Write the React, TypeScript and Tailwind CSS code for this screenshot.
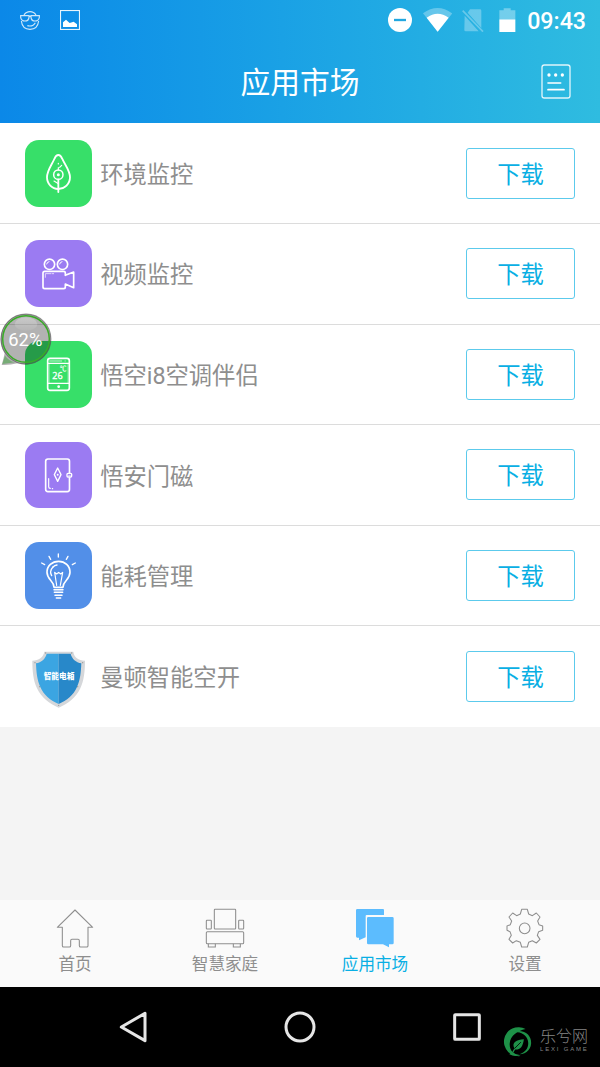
import { ReactNode } from "react";

type AppItem = {
  name: string;
  icon: ReactNode;
  tile: string;
};

type TabItem = {
  label: string;
  icon: ReactNode;
  active?: boolean;
};

function LeafIcon() {
  return (
    <svg viewBox="0 0 200 200" className="h-full w-full" fill="none" stroke="#fff" strokeWidth="5.5" strokeLinecap="round">
      <path d="M100 45C93 45 91 50 88 57C80 75 66 92 66 112C66 132 81 147 100 147C119 147 135 132 135 112C135 92 120 75 112 57C109 50 107 45 100 45Z" />
      <circle cx="100" cy="104" r="14" strokeWidth="4.5" />
      <circle cx="100" cy="104" r="4.5" fill="#fff" stroke="none" />
      <path d="M100 119V156" />
      <path d="M100 90V83M104 82L110 76M87 123L98 130M100 70V72" strokeWidth="3.5" />
    </svg>
  );
}

function CameraIcon() {
  return (
    <svg viewBox="0 0 200 200" className="h-full w-full" fill="none" stroke="#fff" strokeWidth="5" strokeLinecap="round" strokeLinejoin="round">
      <circle cx="73.5" cy="73" r="15.5" />
      <circle cx="112.5" cy="73" r="15.5" />
      <path d="M65 72Q66 66 72 65M104 72Q105 66 111 65" strokeWidth="3" />
      <path d="M59 94H116Q121 94 121 99V106L146 96V143L121 132V141Q121 146 116 146H59Q54 146 54 141V99Q54 94 59 94Z" />
      <path d="M61 112V101H77M81 101H86" strokeWidth="3" opacity="0.7" />
    </svg>
  );
}

function AirConditionerIcon() {
  return (
    <svg viewBox="0 0 200 200" className="h-full w-full" fill="none" stroke="#fff" strokeWidth="5" strokeLinecap="round">
      <rect x="68" y="52" width="65" height="96" rx="7" />
      <path d="M69 67H132M69 127H132" strokeWidth="3.5" />
      <path d="M74 60H110M120 60H121" strokeWidth="2" />
      <path d="M73 67V127M128.5 67V127" strokeWidth="1.5" opacity="0.6" />
      <circle cx="101" cy="137" r="4" fill="#fff" stroke="none" />
      <text x="82" y="115" fontSize="27" fill="#fff" stroke="#fff" strokeWidth="1" className="font-['Open_Sans',sans-serif]">
        26
      </text>
      <text x="105" y="91" fontSize="19" fill="#fff" stroke="#fff" strokeWidth="0.5" className="font-['Noto_Sans_CJK_SC',sans-serif]">
        ℃
      </text>
    </svg>
  );
}

function DoorIcon() {
  return (
    <svg viewBox="0 0 200 200" className="h-full w-full" fill="none" stroke="#fff" strokeWidth="5" strokeLinecap="round" strokeLinejoin="round">
      <path d="M133.5 92V58Q133.5 51 127 51H69Q62 51 62 58V142Q62 149 69 149H127Q133.5 149 133.5 142V108" />
      <path d="M98 78L108 98L98 118L88 98Z" strokeWidth="4" />
      <circle cx="98" cy="98" r="3" fill="#fff" stroke="none" />
      <rect x="126" y="94" width="14" height="11" rx="3" strokeWidth="4" />
      <path d="M131 100H136" strokeWidth="2" />
      <path d="M71 110V134Q71 139 76 139M82 140H83" strokeWidth="3.5" />
    </svg>
  );
}

function BulbIcon() {
  return (
    <svg viewBox="0 0 200 200" className="h-full w-full" fill="none" stroke="#fff" strokeWidth="5" strokeLinecap="round" strokeLinejoin="round">
      <path d="M87 136C87 115 66 114 66 91C66 72 81 58 101 58C120 58 135 72 135 91C135 114 114 115 114 136Z" />
      <path d="M87 143H114M88 151H113M90 160H111M94 168H107" strokeWidth="4.5" />
      <path d="M84 75Q89 70 96 69M77 91V93Q79 99 80 101" strokeWidth="4" />
      <path d="M77 89Q78 81 84 75" strokeWidth="4" />
      <path d="M95 130L89 91L95 96L101 91L107 96L113 91L106 130" strokeWidth="3.5" />
      <path d="M100 36V45M72 43L77 52M129 43L124 52M50 63L59 68M151 63L142 68" strokeWidth="4" />
    </svg>
  );
}

function ShieldIcon() {
  return (
    <svg viewBox="0 0 200 200" className="h-full w-full">
      <path
        d="M58 26H145C147 42 160 53 180 53C180 85 177 112 166 136C152 165 130 182 101 194C73 182 50 165 36 136C25 112 22 85 22 53C42 53 55 42 58 26Z"
        fill="#d5d7da"
      />
      <path d="M101 32H65C61 48 49 58 33 61C34 88 36 110 46 132C57 157 76 172 101 183Z" fill="#3ba5e2" />
      <path d="M101 32H137C141 48 153 58 169 61C168 88 166 110 156 132C145 157 126 172 101 183Z" fill="#2888c9" />
      <g fill="#999">
        <circle cx="62" cy="30" r="2" />
        <circle cx="140" cy="30" r="2" />
        <circle cx="30" cy="59" r="2" />
        <circle cx="173" cy="59" r="2" />
        <circle cx="44" cy="131" r="2" />
        <circle cx="158" cy="131" r="2" />
        <circle cx="101" cy="187" r="2" />
      </g>
      <text x="56" y="109" fontSize="23" fontWeight="900" fill="#fff" className="font-['Noto_Sans_CJK_SC',sans-serif]">
        智能电箱
      </text>
    </svg>
  );
}

function HomeIcon() {
  return (
    <svg viewBox="0 0 120 120" className="h-10 w-10" fill="none" stroke="currentColor" strokeWidth="3.2" strokeLinejoin="round">
      <path d="M60 6L7 58H22V113Q22 117 26 117H43Q47 117 47 113V98Q47 94 51 94H69Q73 94 73 98V113Q73 117 77 117H95Q99 117 99 113V58H113Z" />
    </svg>
  );
}

function SofaIcon() {
  return (
    <svg viewBox="0 0 120 120" className="h-10 w-10" fill="none" stroke="currentColor" strokeWidth="3.2">
      <rect x="28" y="4" width="64" height="59" rx="2" />
      <rect x="4" y="37" width="15" height="26" rx="2" />
      <rect x="101" y="37" width="15" height="26" rx="2" />
      <rect x="4" y="71" width="112" height="36" rx="3" />
      <path d="M10 107V117H31V107M85 107V117H106V107" />
    </svg>
  );
}

function MarketIcon() {
  return (
    <svg viewBox="0 0 120 120" className="h-10 w-10" fill="#5cbcfe">
      <path d="M7 3H84Q87 3 87 6V21H35Q32 21 32 24V88L12 97V89H7Q3 89 3 85V7Q3 3 7 3Z" />
      <path d="M40 27H112Q116 27 116 31V105Q116 109 112 109H102V118L84 109H40Q36 109 36 105V31Q36 27 40 27Z" />
    </svg>
  );
}

function GearIcon() {
  return (
    <svg viewBox="0 0 120 120" className="h-10 w-10" fill="none" stroke="currentColor" strokeWidth="3.2" strokeLinejoin="round">
      <path d="M50 4H67L71 18L82 23L94 15L105 27L98 39L102 50L113 54V67L101 71L97 82L105 94L94 105L82 98L71 103L67 117H50L46 103L34 98L23 105L12 94L19 82L15 71L6 67V54L16 50L20 39L12 27L23 15L35 23L46 18Z" />
      <circle cx="59" cy="61" r="16" />
    </svg>
  );
}

const apps: AppItem[] = [
  { name: "环境监控", icon: <LeafIcon />, tile: "bg-[#37df69]" },
  { name: "视频监控", icon: <CameraIcon />, tile: "bg-[#9b7bf2]" },
  { name: "悟空i8空调伴侣", icon: <AirConditionerIcon />, tile: "bg-[#37df69]" },
  { name: "悟安门磁", icon: <DoorIcon />, tile: "bg-[#9b7bf2]" },
  { name: "能耗管理", icon: <BulbIcon />, tile: "bg-[#528fe8]" },
  { name: "曼顿智能空开", icon: <ShieldIcon />, tile: "" },
];

const tabs: TabItem[] = [
  { label: "首页", icon: <HomeIcon /> },
  { label: "智慧家庭", icon: <SofaIcon /> },
  { label: "应用市场", icon: <MarketIcon />, active: true },
  { label: "设置", icon: <GearIcon /> },
];

function StatusBar() {
  return (
    <div className="flex h-10 items-center justify-between pl-5 pr-[14px]">
      <div className="flex items-center gap-5">
        <svg viewBox="0 0 60 60" className="h-5 w-5 opacity-80" fill="none" stroke="#fff" strokeWidth="3.5">
          <path d="M12 15Q18 5 30 5Q42 5 48 15M4 33Q7 58 30 58Q53 58 56 33" />
          <path d="M2 17H27V22Q26 33 15 33Q4 33 2 22Z" />
          <path d="M33 17H58V22Q56 33 45 33Q34 33 33 22Z" />
          <path d="M27 19H33M22 47Q39 51 46 38" />
        </svg>
        <svg viewBox="0 0 60 60" className="h-5 w-5" fill="none">
          <rect x="1.5" y="1.5" width="57" height="57" stroke="#fff" strokeWidth="3.5" opacity="0.9" />
          <path d="M9 51V37L18 29L29 39L41 35L51 43V51Z" fill="#fff" />
        </svg>
      </div>
      <div className="flex items-center">
        <svg viewBox="0 0 72 72" className="h-6 w-6">
          <circle cx="36" cy="36" r="36" fill="#fff" />
          <path d="M18 36H54" stroke="#22a7e0" strokeWidth="7" />
        </svg>
        <svg viewBox="0 0 88 72" className="ml-[11px] h-6 w-[29.3px]" fill="#fff">
          <path d="M0 16Q44 -16 88 16L44 71Z" opacity="0.3" />
          <path d="M11 29Q44 6 77 29L44 71Z" />
        </svg>
        <svg viewBox="0 0 66 72" className="ml-[10px] h-6 w-[22px]">
          <path d="M24 4H54Q58 4 58 8V60L17 14ZM8 23L50 70H11Q7 70 7 66Z" fill="#fff" opacity="0.3" />
          <path d="M2 8L63 71" stroke="#fff" strokeWidth="5" opacity="0.3" />
        </svg>
        <svg viewBox="0 0 50 74" className="ml-[15px] h-[24.7px] w-[16.7px]" fill="#fff">
          <path d="M1 7H14V1H35V7H49V34H1Z" opacity="0.35" />
          <path d="M1 34H49V73H1Z" />
        </svg>
        <span className="ml-[11px] translate-y-px font-['Roboto',sans-serif] text-[23.2px] font-medium leading-10 text-white">
          09:43
        </span>
      </div>
    </div>
  );
}

function AppRow({ item }: { item: AppItem }) {
  return (
    <li className="flex h-[100.6px] items-center border-b border-[#dcdcdc] bg-white px-[25px] last:border-transparent">
      <div className={`h-[66.67px] w-[66.67px] shrink-0 overflow-hidden rounded-[14px] ${item.tile}`}>{item.icon}</div>
      <span className="ml-[8.5px] flex-1 pt-[4px] text-[23.3px] text-[#8e8e8e]">{item.name}</span>
      <button className="h-[51px] w-[109px] rounded-[3px] border border-[#5ccaec] pt-[3px] text-[23.3px] leading-[46px] text-[#09afe4]">
        下载
      </button>
    </li>
  );
}

function FloatingBall() {
  return (
    <div className="absolute left-0 top-[313px] h-[54px] w-[54px]">
      <svg viewBox="0 0 162 162" className="h-full w-full">
        <defs>
          <linearGradient id="ballShine" x1="0" y1="0" x2="0" y2="1">
            <stop offset="0" stopColor="#fff" stopOpacity="0.3" />
            <stop offset="1" stopColor="#fff" stopOpacity="0.05" />
          </linearGradient>
        </defs>
        <path
          d="M78 3A76 76 0 1 1 52 151Q30 157 5 156Q10 140 14 121A76 76 0 0 1 78 3Z"
          fill="#000"
          fillOpacity="0.3"
        />
        <path d="M15 128L7 153L45 148Q26 143 15 128Z" fill="#2fa52d" fillOpacity="0.45" />
        <circle cx="78" cy="78" r="70" fill="none" stroke="#38ac26" strokeWidth="4.5" />
        <circle cx="78" cy="78" r="74.5" fill="none" stroke="#555" strokeWidth="3.5" strokeOpacity="0.65" />
        <ellipse cx="78" cy="33" rx="34" ry="20" fill="url(#ballShine)" />
        <text x="76" y="99" textAnchor="middle" fontSize="55" fill="#fff" className="font-['Roboto',sans-serif]">
          62%
        </text>
      </svg>
    </div>
  );
}

function SystemNav() {
  return (
    <div className="relative flex h-20 items-center justify-between bg-black pl-[119px] pr-[118px]">
      <svg viewBox="0 0 84 96" className="h-8 w-7" fill="none" stroke="#e6e6e6" strokeWidth="9" strokeLinejoin="round">
        <path d="M7 48L78 7V89Z" />
      </svg>
      <svg viewBox="0 0 96 96" className="h-8 w-8" fill="none" stroke="#e6e6e6" strokeWidth="9">
        <circle cx="48" cy="48" r="42" />
      </svg>
      <svg viewBox="0 0 90 90" className="h-[30px] w-[30px]" fill="none" stroke="#e6e6e6" strokeWidth="9" strokeLinejoin="round">
        <rect x="8" y="8" width="74" height="74" rx="2" />
      </svg>
      <div className="absolute bottom-[10px] left-[503px] flex items-center">
        <svg viewBox="0 0 92 92" className="h-[31px] w-[31px]" fill="#1e9148">
          <path d="M67 9A43 43 0 1 0 52 89C32 88 18 71 20 51C22 29 43 14 67 9Z" />
          <path d="M31 18C55 9 78 19 83 43C87 66 70 84 49 84C69 77 78 62 74 44C70 24 50 16 31 18Z" />
          <path d="M62 39C59 61 51 71 36 70L30 80L27 78L34 66C24 49 41 40 62 39Z" />
          <path d="M34 67L53 48" stroke="#000" strokeWidth="2.5" fill="none" />
          <path d="M19 84Q33 92 52 87Q34 84 24 75Z" />
        </svg>
        <div className="ml-[6px] -translate-y-px text-[#858585]">
          <div className="text-[16px] font-light leading-[17px]">乐兮网</div>
          <div className="whitespace-nowrap font-['Liberation_Sans',sans-serif] text-[6px] leading-[8px] tracking-[1.8px]">
            LEXI GAME
          </div>
        </div>
      </div>
    </div>
  );
}

export default function App() {
  return (
    <div className="relative flex h-[1067px] w-[600px] flex-col overflow-hidden bg-[#f4f4f4] font-['Roboto','Noto_Sans_CJK_SC',sans-serif]">
      <header className="h-[123.4px] shrink-0 bg-linear-to-r from-[#0b88e8] to-[#2fbce0]">
        <StatusBar />
        <div className="grid h-[83px] grid-cols-[1fr_auto_1fr] items-center">
          <h1 className="col-start-2 pt-[3px] text-[29.8px] leading-none text-white">应用市场</h1>
          <button className="mr-[29px] justify-self-end" aria-label="列表">
            <svg viewBox="0 0 90 105" className="h-[35px] w-[30px]" fill="none" stroke="#fff" strokeLinecap="round">
              <rect x="3" y="3" width="84" height="99" rx="7" strokeWidth="4" opacity="0.85" />
              <path d="M21 57H59M21 77H69" strokeWidth="5" />
              <g fill="#fff" stroke="none">
                <circle cx="24" cy="33" r="5" />
                <circle cx="44" cy="33" r="5" />
                <circle cx="64" cy="33" r="5" />
              </g>
            </svg>
          </button>
        </div>
      </header>

      <ul className="shrink-0">
        {apps.map((item) => (
          <AppRow key={item.name} item={item} />
        ))}
      </ul>

      <div className="flex-1" />

      <nav className="grid h-[87px] shrink-0 grid-cols-4 bg-[#fafafa]">
        {tabs.map((tab) => (
          <button
            key={tab.label}
            className={`flex flex-col items-center pt-[8px] ${tab.active ? "text-[#09afe4]" : "text-[#8e8e8e]"}`}
          >
            {tab.icon}
            <span className="mt-[5px] text-[16.6px] leading-6">{tab.label}</span>
          </button>
        ))}
      </nav>

      <SystemNav />
      <FloatingBall />
    </div>
  );
}
